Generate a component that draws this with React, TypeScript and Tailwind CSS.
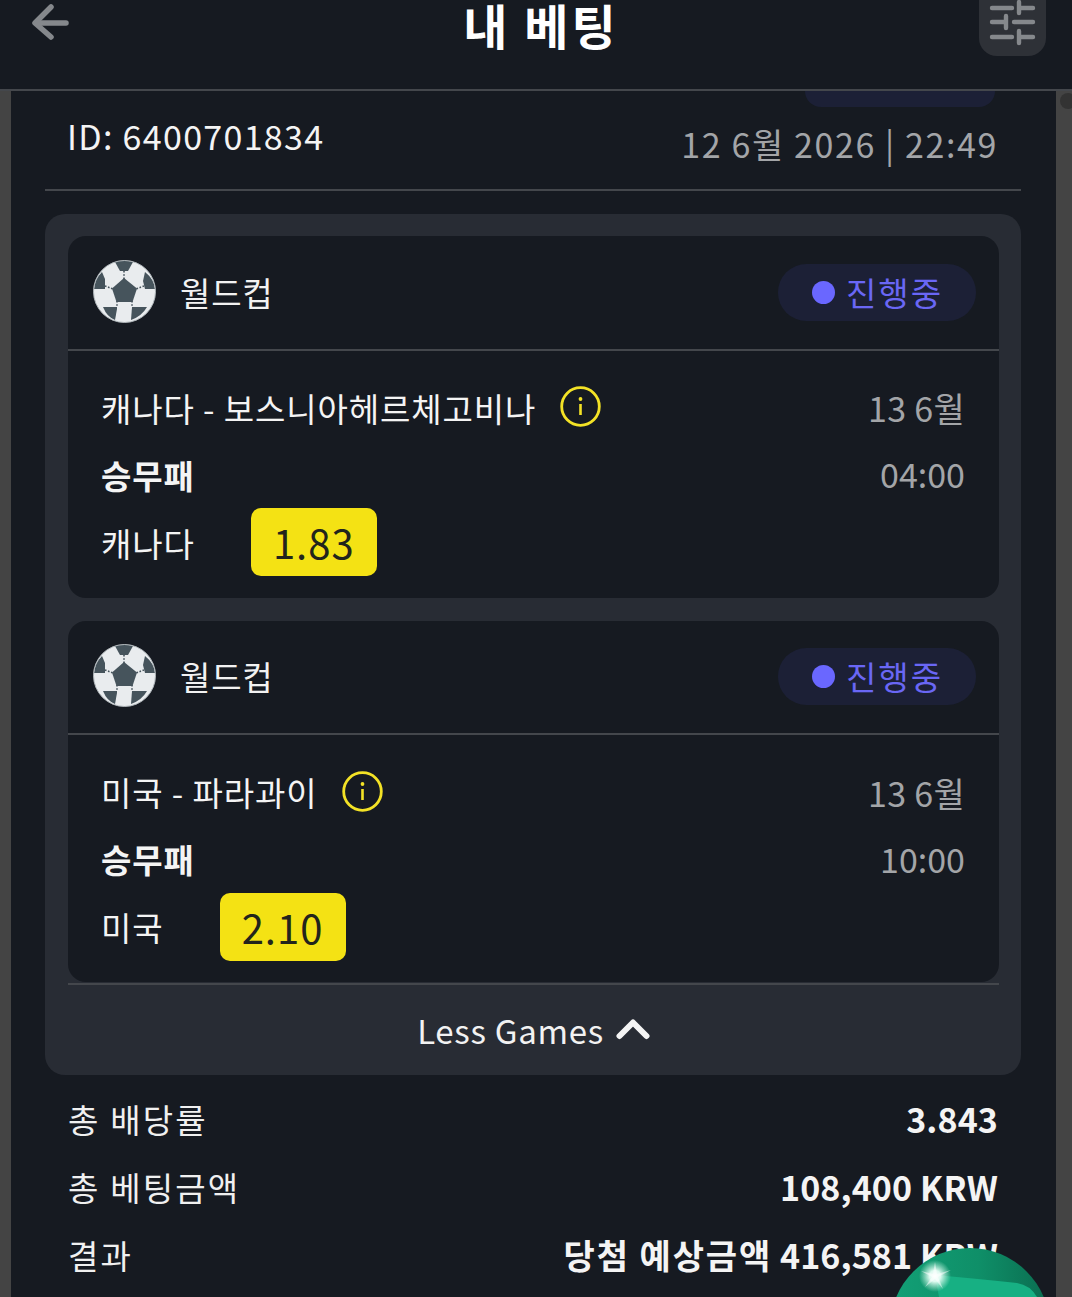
import React from "react";

const FONT = { fontFamily: '"Noto Sans CJK KR", "Noto Sans", sans-serif' };

function Ball() {
  return (
    <svg width="63" height="63" viewBox="0 0 63 63" className="mt-[-3px] shrink-0">
      <circle cx="31.5" cy="31.5" r="31" fill="#e9ecee" />
      <g fill="#46545c">
        <path d="M31 18 L44 28.5 L39.5 42 L23.5 42 L19 28.5 Z" />
        <path d="M22 2 Q31 -0.5 40 2 L35 11 L27 11 Z" />
        <path d="M9 12 L12 19 L12 29 L1 29 Q2 19 9 12 Z" />
        <path d="M52 12 L50 21 L52 29 L62 29 Q61 19 52 12 Z" />
        <path d="M10 47 L24 47 L24 49 L22 60 Q14 57 10 47 Z" />
        <path d="M39 47 L54 47 Q49 56 38 60 Z" />
      </g>
      <g stroke="#46545c" strokeWidth="1.6" strokeDasharray="1.6 1.6" fill="none">
        <path d="M31 11 L31 19" />
        <path d="M12 26 L20 29" />
        <path d="M51 26 L43 29" />
        <path d="M24 41 L24 47" />
        <path d="M39 41 L39 47" />
      </g>
      <circle cx="31.5" cy="31.5" r="31" fill="none" stroke="#aeb5b9" strokeWidth="1" />
    </svg>
  );
}

function Info() {
  return (
    <svg width="41" height="41" viewBox="0 0 41 41" className="mt-[-3px] shrink-0">
      <circle cx="20.5" cy="20.5" r="18.8" fill="none" stroke="#f3e226" strokeWidth="2.8" />
      <circle cx="20.5" cy="13" r="1.9" fill="#f3e226" />
      <rect x="19.2" y="18" width="2.6" height="11" fill="#f3e226" />
    </svg>
  );
}

function Game({
  match,
  pick,
  odds,
  time,
  head,
  body,
}: {
  match: string;
  pick: string;
  odds: string;
  time: string;
  head: string;
  body: string;
}) {
  return (
    <section className="h-[362px] rounded-[18px] bg-[#161a21]">
      <div className={`flex items-center justify-between border-b-2 border-[#44474c] pl-[25px] pr-[23px] ${head}`}>
        <div className="flex items-center gap-[24px]">
          <Ball />
          <span className="text-[33px] leading-none tracking-[0.8px] text-[#f2f2f2]">월드컵</span>
        </div>
        <div className="flex h-[57px] w-[198px] items-center gap-[11px] rounded-full bg-[#1c2036] pl-[34px] text-[33px] leading-none tracking-[2px] text-[#6a67f5]">
          <span className="h-[23px] w-[23px] rounded-full bg-[#6a67ff]" />
          진행중
        </div>
      </div>
      <div className={`flex justify-between pl-[33px] pr-[34px] ${body}`}>
        <div className="flex flex-col tracking-[0.9px]">
          <div className="flex h-[68px] items-center gap-[24px] pt-[4px] text-[33px] leading-none text-[#f4f4f4]">
            {match}
            <Info />
          </div>
          <div className="flex h-[68px] items-center pt-[2px] text-[33px] font-bold leading-none text-[#f4f4f4]">승무패</div>
          <div className="flex h-[68px] items-center gap-[56px] text-[33px] leading-none text-[#f4f4f4]">
            <span className="mt-[2px]">{pick}</span>
            <span className="flex h-[68px] w-[126px] items-center justify-center rounded-[10px] bg-[#f4e214] text-[40px] leading-none tracking-[1px] text-[#22241c]">
              {odds}
            </span>
          </div>
        </div>
        <div className="flex flex-col items-end text-[#a3a5a8]">
          <div className="flex h-[68px] items-center pt-[4px] text-[34px] leading-none tracking-[0.3px]">13 6월</div>
          <div className="flex h-[68px] items-center text-[34px] leading-none">{time}</div>
        </div>
      </div>
    </section>
  );
}

function Row({ label, children }: { label: string; children: React.ReactNode }) {
  return (
    <div className="flex h-[68px] items-center justify-between">
      <span className="text-[33px] leading-none tracking-[2.2px] text-[#f0f0f0]">{label}</span>
      <span className="text-[34px] font-bold leading-none tracking-[0.1px] text-[#f4f4f4]">{children}</span>
    </div>
  );
}

export default function App() {
  return (
    <div style={FONT} className="relative h-[1297px] w-[1072px] overflow-hidden bg-[#161a21]">
      <header className="relative flex h-[91px] items-start justify-between border-b-2 border-[#44474c] bg-[#161a21] pl-[32px] pr-[26px]">
        <svg width="38" height="40" viewBox="0 0 38 40" className="mt-[3px]" fill="none" stroke="#85888c" strokeWidth="5.5" strokeLinecap="round" strokeLinejoin="round">
          <path d="M19 4 L3 20 L19 34" />
          <path d="M4 20 L34 20" />
        </svg>
        <h1 className="absolute left-[341px] top-0 w-[400px] text-center text-[48px] font-bold leading-[48px] tracking-[3px] text-white">내 베팅</h1>
        <div className="h-[56px] w-[67px] rounded-b-[18px] bg-[#2e3137]">
          <svg width="67" height="46" viewBox="0 0 67 46" fill="none" stroke="#85888c" strokeWidth="4.4" strokeLinecap="round">
            <path d="M13 8 H33 M42 8 H54 M40 2 V13" />
            <path d="M13 22 H27 M35 22 H54 M27 16 V28" />
            <path d="M13 37 H33 M42 37 H54 M40 31 V43" />
          </svg>
        </div>
      </header>

      <div className="flex h-[1206px]">
        <div className="w-[11px] shrink-0 bg-[#444444]" />
        <main className="flex-1 pl-[34px] pr-[35px]">
          <div className="flex justify-end pr-[26px]">
            <div className="h-[16px] w-[190px] rounded-b-[24px] bg-[#1c2036]" />
          </div>
          <div className="flex h-[84px] items-start justify-between border-b-2 border-[#44474c] pl-[22px] pr-[23px]">
            <span className="mt-[7px] text-[34px] leading-[44px] tracking-[1.3px] text-[#f4f4f4]">ID: 6400701834</span>
            <span className="mt-[15px] text-[34px] leading-[44px] tracking-[1.6px] text-[#a3a5a8]">12 6월 2026 | 22:49</span>
          </div>

          <div className="mt-[23px] flex h-[861px] flex-col rounded-[20px] bg-[#282c34] pl-[23px] pr-[22px] pt-[22px]">
            <Game match="캐나다 - 보스니아헤르체고비나" pick="캐나다" odds="1.83" time="04:00" head="h-[115px]" body="pt-[21px]" />
            <div className="h-[23px] shrink-0" />
            <Game match="미국 - 파라과이" pick="미국" odds="2.10" time="10:00" head="h-[114px]" body="pt-[22px]" />
            <div className="mt-[1px] h-[2px] shrink-0 bg-[#44474c]" />
            <div className="flex h-[90px] items-center justify-center gap-[12px] text-[33px] leading-none tracking-[0.7px] text-[#f2f2f2]">
              Less Games
              <svg width="34" height="22" viewBox="0 0 34 22" fill="none" stroke="#f4f4f4" strokeWidth="6" strokeLinecap="round" strokeLinejoin="round" className="mb-[3px]">
                <path d="M3.5 18 L17 4.5 L30.5 18" />
              </svg>
            </div>
          </div>

          <div className="pl-[23px] pr-[23px] pt-[10px]">
            <Row label="총 배당률">3.843</Row>
            <Row label="총 베팅금액">108,400 KRW</Row>
            <Row label="결과">
              <span className="tracking-[1.9px]">당첨 예상금액</span> 416,581 KRW
            </Row>
          </div>
        </main>
        <div className="w-[16px] shrink-0 bg-[#444444]" />
      </div>

      <div className="absolute left-[1060px] top-[93px] h-[16px] w-[16px] rounded-full bg-[#333333]" />

      <svg width="170" height="60" viewBox="0 0 170 60" className="absolute left-[885px] top-[1237px]">
        <defs>
          <linearGradient id="rim" x1="0" y1="0" x2="1" y2="0">
            <stop offset="0%" stopColor="#12a177" />
            <stop offset="55%" stopColor="#0f8f68" />
            <stop offset="100%" stopColor="#0a6a4e" />
          </linearGradient>
          <radialGradient id="spark">
            <stop offset="0%" stopColor="#ffffff" />
            <stop offset="35%" stopColor="#eafff7" stopOpacity="0.95" />
            <stop offset="100%" stopColor="#bff5df" stopOpacity="0" />
          </radialGradient>
          <clipPath id="ball">
            <circle cx="85" cy="91" r="80" />
          </clipPath>
        </defs>
        <g clipPath="url(#ball)">
          <rect width="170" height="60" fill="url(#rim)" />
          <path d="M50 38 Q95 42 132 46 Q145 48 152 60 L54 60 Z" fill="#17b083" />
        </g>
        <circle cx="50" cy="39" r="16" fill="url(#spark)" />
        <path d="M50 25 L52 37 L66 33 L53 40 L58 52 L50 42 L40 50 L47 40 L36 34 L48 37 Z" fill="#ffffff" opacity="0.5" />
      </svg>
    </div>
  );
}
